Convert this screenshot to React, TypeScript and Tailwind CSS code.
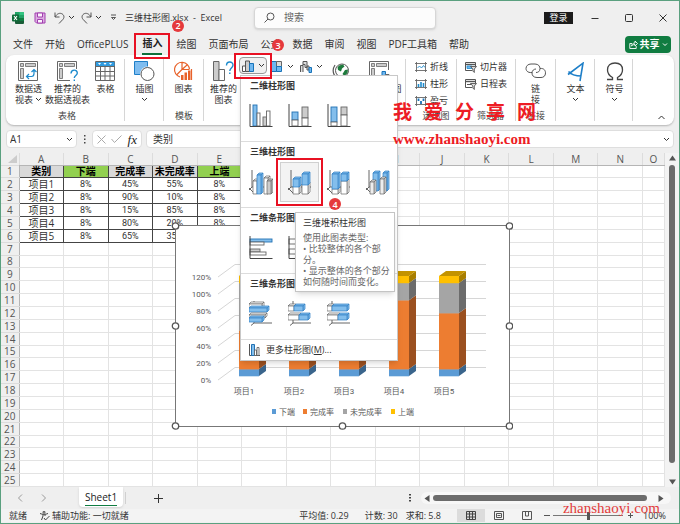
import type { ReactNode } from "react"
import clsx from "clsx"

//------------------------------------------------------------
// DATA

const COLUMNS = ["A", "B", "C", "D", "E", "F", "G", "H", "I", "J", "K", "L", "M", "N", "O"]

const ROWS: string[][] = [
  ["类别", "下端", "完成率", "未完成率", "上端"],
  ["项目1", "8%", "45%", "55%", "8%"],
  ["项目2", "8%", "90%", "10%", "8%"],
  ["项目3", "8%", "15%", "85%", "8%"],
  ["项目4", "8%", "80%", "20%", "8%"],
  ["项目5", "8%", "65%", "35%", "8%"],
]

const TABS = [
  "文件",
  "开始",
  "OfficePLUS",
  "插入",
  "绘图",
  "页面布局",
  "公式",
  "数据",
  "审阅",
  "视图",
  "PDF工具箱",
  "帮助",
]

const BLUE = "#83beec"
const INK = "#444"

//------------------------------------------------------------
// SMALL ICONS

const Chevron = ({ up = false }: { up?: boolean }) => (
  <svg width="7" height="5" viewBox="0 0 7 5" fill="none" stroke="#333" className="shrink-0">
    <path d={up ? "M.5 4 3.500 1l3 3" : "M1 1l2.500 2.500L6 1"} />
  </svg>
)

const ExcelIcon = () => (
  <svg width="12" height="12" viewBox="0 0 12 12">
    <path d="M3 0h8q1 0 1 1v5H3z" fill="#21a366" />
    <path d="M7.500 0H11q1 0 1 1v2H7.500z" fill="#33c481" />
    <path d="M3 6h9v5q0 1-1 1H4q-1 0-1-1z" fill="#185c37" />
    <path d="M7.500 6H12v3H7.500z" fill="#107c41" />
    <rect y="2.500" width="7" height="7" rx="1" fill="#0e6b38" />
    <path d="M2 4l3 4M5 4L2 8" stroke="#fff" strokeWidth="1.100" />
  </svg>
)

const SaveIcon = () => (
  <svg width="12" height="12" viewBox="0 0 12 12" fill="#dcaee2" stroke="#a23fb0">
    <path d="M1 1h10v10H2.500L1 9.500z" />
    <path d="M3.500 1h5v4h-5z" fill="#fbf2fc" />
    <path d="M3.500 11V7.500h5V11z" fill="#fbf2fc" />
  </svg>
)

const UndoIcon = ({ flip = false }: { flip?: boolean }) => (
  <svg
    width="11"
    height="12"
    viewBox="0 0 11 12"
    fill="none"
    stroke="#555"
    className={clsx(flip && "-scale-x-100")}
  >
    <path d="M1 .5V5h4.500M1 5C3 1.500 6 .5 8.300 2c2.200 1.500 2 4 .5 5.500L5 11.500" />
  </svg>
)

const SearchIcon = () => (
  <svg width="11" height="11" viewBox="0 0 11 11" fill="none" stroke="#555">
    <circle cx="6.500" cy="4.500" r="3.500" />
    <path d="M4 7L.5 10.500" />
  </svg>
)

const ShareIcon = () => (
  <svg width="9" height="9" viewBox="0 0 9 9" fill="none" stroke="#fff" strokeWidth=".9">
    <path d="M3 3.500H.8v5h6.400V6M2.500 6C3 4 4 3 6 3V1l2.500 2.500L6 6V4.500C4.500 4.500 3.500 5 2.500 6z" />
  </svg>
)

//------------------------------------------------------------
// RIBBON ICONS

const PivotIcon = ({ question = false }: { question?: boolean }) => (
  <svg width="21" height="21" viewBox="0 0 21 21" fill="none" stroke="#666">
    <path d={question ? "M13 19.500H.5V.5h19V8" : "M.5.5h19v19H.5z"} fill="#fff" />
    <path d="M2.500 2.500h3v3h-3zM7.500 2.500h10v3h-10zM2.500 7.500h3v10h-3z" fill="#ccc" strokeWidth=".8" />
    {question ? (
      <path d="M14 12.500c.2-4.500 6.300-4.300 6.300-.5 0 2.500-3 2.500-3 5M17.300 18.500v1.500" stroke="#1e8bcd" strokeWidth="1.400" />
    ) : (
      <path d="M9 15.500h4.500q2.500 0 2.500-3V9M11 13l-2.500 2.500L11 18M13.500 11L16 8.500l2.500 2.500" stroke="#1e8bcd" strokeWidth="1.200" />
    )}
  </svg>
)

const TableIcon = () => (
  <svg width="21" height="21" viewBox="0 0 21 21" fill="none" stroke="#666">
    <path d="M.5.5h19v19H.5z" fill="#fff" />
    <path d="M1 1h18.500v4H1z" fill="#2f9be0" stroke="none" />
    <path d="M3 2h3L4.500 4zM8.500 2h3L10 4zM14 2h3l-1.500 2z" fill="#fff" stroke="none" />
    <path d="M.5 5.500h19M.5 10.500h19M.5 15h19M5.500 5.500v14M10 5.500v14M15 5.500v14" />
  </svg>
)

const ShapesIcon = () => (
  <svg width="21" height="21" viewBox="0 0 21 21">
    <path d="M.5.500h13v13H.5z" fill="#7fbdf0" stroke="#1e7fc8" />
    <circle cx="13.500" cy="13" r="7.500" fill="#fff" />
    <circle cx="13.500" cy="13" r="6.500" fill="#fff" stroke="#555" />
  </svg>
)

const TemplateChartIcon = () => (
  <svg width="21" height="21" viewBox="0 0 21 21" fill="none" stroke="#e8622a" strokeWidth="1.200">
    <path d="M7 16A7.500 7.500 0 1 1 16.500 8.500M9 1.500v7L3.500 14M9 8.500h7M9 8.500L14 4" />
    <path d="M8 14h2.500v5H8zM11.500 11.500H14V19h-2.500zM15 9.500h2.500V19H15z" fill="#e8622a" stroke="none" />
    <path d="M18.500 8v11" />
  </svg>
)

const RecommendedChartIcon = () => (
  <svg width="22" height="21" viewBox="0 0 22 21" fill="none" stroke="#666">
    <path d="M.5.500h5.500v19H.5z" fill="#ccc" />
    <path d="M6 8.500h5.500v11H6z" fill="#fff" />
    <path d="M13.500 4.500c0-4.500 6.500-4.500 6.500-.5 0 3-3.200 3-3.200 6M16.800 11.500V13" stroke="#1e8bcd" strokeWidth="1.400" />
  </svg>
)

const ColumnIcon = () => (
  <svg width="12" height="12" viewBox="0 0 12 12" stroke="#555">
    <path d="M.5 6h3v5.500h-3z" fill="#fff" />
    <path d="M3.500 1h4v10.500h-4z" fill="#ccc" />
    <path d="M7.500 3.500h4v8h-4z" fill="#6fb7f0" stroke="#1873b8" />
  </svg>
)

const HierarchyIcon = () => (
  <svg width="12" height="12" viewBox="0 0 12 12" stroke="#666">
    <path d="M.5.500h5v10h-5z" fill="#6fb7f0" stroke="#1873b8" />
    <path d="M5.500.500h5v5h-5z" fill="#ddd" />
    <path d="M5.500 5.500h5v5h-5z" fill="#6fb7f0" stroke="#1873b8" />
  </svg>
)

const WaterfallIcon = () => (
  <svg width="12" height="12" viewBox="0 0 12 12" stroke="#555" fill="#ddd">
    <path d="M.5 11V4.500h2.500V11M3 4.500v-4h4v6H5v-3H3M7 5h2v4H7z" />
    <path d="M9 6.500h2.500v5H9z" fill="#6fb7f0" stroke="#1873b8" />
  </svg>
)

const GlobeIcon = () => (
  <svg width="18" height="20" viewBox="0 0 18 20" fill="none">
    <circle cx="10" cy="8.500" r="6.500" fill="#fff" stroke="#555" />
    <path d="M7 3.500l4-1 1.500 2-2.500 2-1 3-3-1.500-.5-2.500zM13 8l3-.5-.5 3.500-3 3-2-2z" fill="#1e7a3c" />
    <path d="M3 3C-1 9 2 17 9.500 17.500c3 0 5-1 6.500-2.500M9.500 17.500V20" stroke="#555" strokeWidth="1.200" />
  </svg>
)

const PivotChartIcon = () => (
  <svg width="21" height="21" viewBox="0 0 21 21" stroke="#666">
    <path d="M11 19.500H.5V.5h19V9" fill="#fff" />
    <path d="M2.500 2.500h3v3h-3zM7.500 2.500h10v3h-10zM2.500 7.500h3v10h-3z" fill="#ccc" strokeWidth=".8" />
    <path d="M13 10.500h3.500v9H13z" fill="#6fb7f0" stroke="#1873b8" />
    <path d="M16.500 13.500h3.500v6h-3.500z" fill="#fff" />
  </svg>
)

const SparkIcon = ({ kind }: { kind: "line" | "column" | "winloss" }) => (
  <svg width="12" height="10" viewBox="0 0 12 10" fill="none" stroke="#666" strokeWidth=".9">
    <path d="M1.500 0v10M10.500 0v10M0 1.500h12M0 8.500h12" />
    {kind === "line" && <path d="M2.500 6l2-2 2 2 2-2.500 1.500 2" stroke="#1e8bcd" />}
    {kind === "column" && <path d="M3.500 8V5M6 8V3M8.500 8V4" stroke="#1e8bcd" strokeWidth="1.600" />}
    {kind === "winloss" && <path d="M3.500 2.500V5M6 5v3M8.500 2.500V5" stroke="#1873b8" strokeWidth="1.800" />}
  </svg>
)

const FilterIcon = ({ timeline = false }: { timeline?: boolean }) => (
  <svg width="12" height="12" viewBox="0 0 12 12" fill="none" stroke="#555">
    <path d="M7 9.500H.5v-8h10V5" fill="#fff" />
    <path d="M.5 3.500h10" strokeWidth="1.400" />
    {timeline ? <path d="M2 6.500h4" /> : <path d="M2 5h5v2.500H2z" fill="#6fb7f0" stroke="#1e8bcd" strokeWidth=".8" />}
    <path d="M5.500 5.500h6L9.300 8v3.500L7.800 10V8z" fill="#ddd" strokeWidth=".9" />
  </svg>
)

const LinkIcon = () => (
  <svg width="22" height="17" viewBox="0 0 22 17" fill="none" stroke="#555">
    <path d="M7 9.500C2 10 1 7 1 5.500 1 3 3 1 6 1h4c3.500 0 5 2.500 5 4.500 0 3-2 4-4 4" />
    <path d="M15 5.500c4.500-.5 5.500 2.500 5.500 4.500 0 3-2 4.500-4.500 4.500h-4c-3.500 0-5-2-5-4.500C7 7.500 9 6 11 6" />
  </svg>
)

const TextIcon = () => (
  <svg width="18" height="20" viewBox="0 0 18 20" fill="none" stroke="#1e7fc8" strokeWidth="1.600">
    <path d="M1 12.500L16 1.200 13 19M1.500 9.500c2 2.500 7 4.500 13 4.500" />
  </svg>
)

const OmegaIcon = () => (
  <svg width="18" height="19" viewBox="0 0 18 19" fill="none" stroke="#444" strokeWidth="1.300">
    <path d="M1 17.500h5.500v-2C3 13.500 1.500 11 1.500 8c0-4.500 3-7 7.500-7s7.500 2.500 7.500 7c0 3-1.500 5.500-5 7.500v2H17" />
  </svg>
)

//------------------------------------------------------------
// CHART GALLERY ICONS

type PrismProps = { x: number; y: number; w: number; h: number; fill?: string; top?: boolean }

// front face plus a two pixel deep side, and the lid when `top` is set
const Prism = ({ x, y, w, h, fill = "#fff", top = true }: PrismProps) => (
  <g fill={fill} stroke={fill === BLUE ? "#2f80c4" : "#666"} strokeWidth=".7" strokeLinejoin="round">
    {top && <path d={`M${x} ${y}l2-2h${w}l-2 2z`} />}
    <path d={`M${x + w} ${y}l2-2v${h}l-2 2z`} />
    <rect x={x} y={y} width={w} height={h} />
  </g>
)

type FlatProps = { x: number; y: number; w: number; h: number; fill?: string }

const Flat = ({ x, y, w, h, fill = "#fff" }: FlatProps) => (
  <rect x={x} y={y} width={w} height={h} fill={fill} stroke={fill === BLUE ? "#2272b4" : "#666"} strokeWidth=".9" />
)

const GalleryIcon = ({ children, axis = "flat" }: { children: ReactNode; axis?: "flat" | "deep" | "bar" }) => (
  <svg width="24" height="26" viewBox="0 0 24 26" fill="none">
    {axis === "deep" && <path d="M3 1v17L0 21M3 18h20M0 19l6 6" stroke="#555" strokeWidth=".9" />}
    {axis === "bar" && <path d="M5 0v3M5 19v3l-3 2.500M5 22h18" stroke="#555" strokeWidth=".9" />}
    {children}
    {axis === "flat" && <path d="M1 1v22.500h22.500" stroke={INK} />}
  </svg>
)

const SECTIONS: { title: string; items: { label: string; icon: ReactNode }[] }[] = [
  {
    title: "二维柱形图",
    items: [
      {
        label: "簇状柱形图",
        icon: (
          <GalleryIcon>
            <Flat x={4} y={2} w={4} h={21} fill={BLUE} />
            <Flat x={8} y={10} w={3} h={13} />
            <Flat x={14} y={14} w={3.5} h={9} fill="#ccc" />
            <Flat x={17.5} y={8} w={3.5} h={15} />
          </GalleryIcon>
        ),
      },
      {
        label: "堆积柱形图",
        icon: (
          <GalleryIcon>
            <Flat x={4} y={9} w={6} h={8} fill={BLUE} />
            <Flat x={4} y={17} w={6} h={6} />
            <Flat x={14} y={4} w={6} h={11} fill="#ccc" />
            <Flat x={14} y={15} w={6} h={8} />
          </GalleryIcon>
        ),
      },
      {
        label: "百分比堆积柱形图",
        icon: (
          <GalleryIcon>
            <Flat x={4} y={4} w={6} h={15} fill={BLUE} />
            <Flat x={4} y={19} w={6} h={4} />
            <Flat x={14} y={4} w={6} h={8} fill="#ccc" />
            <Flat x={14} y={12} w={6} h={11} />
          </GalleryIcon>
        ),
      },
    ],
  },
  {
    title: "三维柱形图",
    items: [
      {
        label: "三维簇状柱形图",
        icon: (
          <GalleryIcon axis="deep">
            <Prism x={4} y={12} w={4} h={13} />
            <Prism x={8} y={6} w={4} h={19} fill={BLUE} />
            <Prism x={15} y={9} w={4} h={16} />
            <Prism x={18} y={12} w={4} h={13} fill="#ccc" />
          </GalleryIcon>
        ),
      },
      {
        label: "三维堆积柱形图",
        icon: (
          <GalleryIcon axis="deep">
            <Prism x={5} y={17} w={6} h={8} />
            <Prism x={5} y={10} w={6} h={8} fill={BLUE} />
            <Prism x={14} y={15} w={6} h={10} />
            <Prism x={14} y={5} w={6} h={11} fill={BLUE} />
          </GalleryIcon>
        ),
      },
      {
        label: "三维百分比堆积柱形图",
        icon: (
          <GalleryIcon axis="deep">
            <Prism x={5} y={20} w={6} h={5} />
            <Prism x={5} y={5} w={6} h={15} fill={BLUE} />
            <Prism x={14} y={12} w={6} h={13} />
            <Prism x={14} y={5} w={6} h={7} fill={BLUE} />
          </GalleryIcon>
        ),
      },
      {
        label: "三维柱形图",
        icon: (
          <GalleryIcon axis="deep">
            <Prism x={7} y={4} w={5} h={18} fill={BLUE} />
            <Prism x={17} y={4} w={4} h={18} fill={BLUE} />
            <Prism x={4} y={13} w={4} h={12} fill="#eee" />
            <Prism x={14} y={10} w={4} h={15} fill="#eee" />
          </GalleryIcon>
        ),
      },
    ],
  },
  {
    title: "二维条形图",
    items: [
      {
        label: "簇状条形图",
        icon: (
          <GalleryIcon>
            <Flat x={1} y={4} w={22} h={3} fill={BLUE} />
            <Flat x={1} y={7} w={14} h={3} />
            <Flat x={1} y={14} w={10} h={3} fill="#ccc" />
            <Flat x={1} y={17} w={16} h={3} />
          </GalleryIcon>
        ),
      },
      {
        label: "堆积条形图",
        icon: (
          <GalleryIcon>
            <Flat x={1} y={4} w={8} h={5} />
            <Flat x={9} y={4} w={8} h={5} fill={BLUE} />
            <Flat x={1} y={14} w={10} h={5} />
            <Flat x={11} y={14} w={10} h={5} fill="#ccc" />
          </GalleryIcon>
        ),
      },
      {
        label: "百分比堆积条形图",
        icon: (
          <GalleryIcon>
            <Flat x={1} y={4} w={6} h={5} />
            <Flat x={7} y={4} w={14} h={5} fill={BLUE} />
            <Flat x={1} y={14} w={12} h={5} />
            <Flat x={13} y={14} w={8} h={5} fill="#ccc" />
          </GalleryIcon>
        ),
      },
    ],
  },
  {
    title: "三维条形图",
    items: [
      {
        label: "三维簇状条形图",
        icon: (
          <GalleryIcon axis="bar">
            <Prism x={0} y={3} w={13} h={4} />
            <Prism x={0} y={7} w={18} h={4} fill={BLUE} />
            <Prism x={0} y={14} w={16} h={3} />
            <Prism x={0} y={17} w={13} h={4} fill={BLUE} />
          </GalleryIcon>
        ),
      },
      {
        label: "三维堆积条形图",
        icon: (
          <GalleryIcon axis="bar">
            <Prism x={0} y={5} w={6} h={5} />
            <Prism x={6} y={5} w={9} h={5} fill={BLUE} />
            <Prism x={0} y={14} w={11} h={5} />
            <Prism x={11} y={14} w={9} h={5} fill={BLUE} />
          </GalleryIcon>
        ),
      },
      {
        label: "三维百分比堆积条形图",
        icon: (
          <GalleryIcon axis="bar">
            <Prism x={0} y={5} w={5} h={5} />
            <Prism x={5} y={5} w={15} h={5} fill={BLUE} />
            <Prism x={0} y={14} w={11} h={5} />
            <Prism x={11} y={14} w={9} h={5} fill={BLUE} />
          </GalleryIcon>
        ),
      },
    ],
  },
]

//------------------------------------------------------------
// STEP MARKERS

const Step = ({ n, className }: { n: number; className: string }) => (
  <span
    className={clsx(
      "absolute z-30 flex h-3 w-3 items-center justify-center rounded-full bg-[#e5393c] text-[9px] leading-none font-semibold text-white",
      className,
    )}
  >
    {n}
  </span>
)

//------------------------------------------------------------
// RIBBON PARTS

const Group = ({ label, className, children }: { label?: string; className: string; children: ReactNode }) => (
  <div className={clsx("relative flex shrink-0 flex-col justify-between py-[3px]", className)}>
    <div className="flex">{children}</div>
    <div className="h-3 text-center leading-3 text-[#444]">{label}</div>
    <div className="absolute top-1 right-0 bottom-1 w-px bg-[#d6d6d6]" />
  </div>
)

type BigButtonProps = { icon: ReactNode; lines: string[]; arrow?: "inline" | "below"; className?: string }

const BigButton = ({ icon, lines, arrow, className = "w-[39px]" }: BigButtonProps) => (
  <button className={clsx("flex shrink-0 flex-col items-center pt-[3px] leading-[11px]", className)}>
    <span className="flex h-[21px] items-center">{icon}</span>
    <span className="mt-px flex flex-col items-center whitespace-nowrap">
      {lines.map((line, i) => (
        <span key={line} className="flex items-center gap-[2px]">
          {line}
          {arrow === "inline" && i === lines.length - 1 && <Chevron />}
        </span>
      ))}
    </span>
    {arrow === "below" && (
      <span className="flex h-[11px] items-center">
        <Chevron />
      </span>
    )}
  </button>
)

const RowButton = ({ icon, label }: { icon: ReactNode; label: string }) => (
  <button className="flex h-[17px] items-center gap-[3px] whitespace-nowrap">
    {icon}
    {label}
  </button>
)

const ChartMenu = () => (
  <div className="absolute top-full left-px z-20 w-[158px] border border-[#c8c8c8] bg-white shadow-md">
    {SECTIONS.map((section) => (
      <section key={section.title} className="h-[66px] border-b border-[#dcdcdc]">
        <h3 className="h-5 pl-[9px] leading-5 font-bold text-[#333]">{section.title}</h3>
        <div className="flex">
          {section.items.map((item, i) => {
            const active = section.title === "三维柱形图" && i === 1
            return (
              <button
                key={item.label}
                aria-label={item.label}
                className={clsx(
                  "relative flex h-10 w-[39px] items-center justify-center",
                  active && "border border-[#d0d0d0] bg-[#f3f3f3]",
                )}
              >
                {item.icon}
                {active && <span className="absolute -inset-[5px] border-2 border-[#e81123]" />}
                {active && <Step n={4} className="-right-[23px] -bottom-[9px]" />}
              </button>
            )
          })}
        </div>
      </section>
    ))}
    <button className="flex h-5 items-center gap-[6px] pl-2 text-[#333]">
      <svg width="11" height="12" viewBox="0 0 11 12" fill="#fff" stroke="#555">
        <path d="M.5 0v11.500H11" fill="none" />
        <path d="M2.500.500h3v11h-3z" fill={BLUE} stroke="#2272b4" />
        <path d="M5.500 6h2v5.500h-2zM8 3.500h2v8H8z" strokeWidth=".8" />
      </svg>
      <span>
        更多柱形图(<u>M</u>)...
      </span>
    </button>

    {/* TOOLTIP */}
    <div
      role="tooltip"
      className="absolute top-[136px] left-[54px] z-20 w-[100px] border border-[#c4c4c4] bg-white py-1 pl-[7px] leading-[11px] text-[#666] shadow-md"
    >
      <p className="mb-1 text-[#333]">三维堆积柱形图</p>
      <p>使用此图表类型:</p>
      <p>
        • 比较整体的各个部
        <br />
        分。
      </p>
      <p className="whitespace-nowrap">
        • 显示整体的各个部分
        <br />
        如何随时间而变化。
      </p>
    </div>
  </div>
)

const Ribbon = () => (
  <div className="relative z-20 mx-[5px] flex h-[70px] rounded-lg bg-white text-[9px] text-[#333] shadow-[0_1px_2px_rgba(0,0,0,0.25)]">
    <Group label="表格" className="w-[119px] pl-[3px]">
      <BigButton icon={<PivotIcon />} lines={["数据透", "视表"]} arrow="inline" />
      <BigButton icon={<PivotIcon question />} lines={["推荐的", "数据透视表"]} />
      <BigButton icon={<TableIcon />} lines={["表格"]} className="w-[37px]" />
    </Group>
    <Group className="w-[39px]">
      <BigButton icon={<ShapesIcon />} lines={["插图"]} arrow="below" />
    </Group>
    <Group label="模板" className="w-10">
      <BigButton icon={<TemplateChartIcon />} lines={["图表"]} />
    </Group>
    <Group label="图表" className="w-[202px] pl-1">
      <BigButton icon={<RecommendedChartIcon />} lines={["推荐的", "图表"]} className="w-[31px]" />
      <div className="flex h-[17px] gap-1">
        <div className="relative -mt-px">
          <button
            aria-label="插入柱形图或条形图"
            className="flex h-[17px] w-7 items-center justify-center gap-1 rounded border border-[#999] bg-[#f0f0f0]"
          >
            <ColumnIcon />
            <Chevron />
          </button>
          <span className="absolute -inset-x-[5px] -inset-y-1 z-30 border-2 border-[#e81123]" />
          <Step n={3} className="-top-[18px] -right-[17px]" />
          <ChartMenu />
        </div>
        <button aria-label="插入层次结构图表" className="flex w-[25px] items-center gap-1">
          <HierarchyIcon />
          <Chevron />
        </button>
        <button aria-label="插入瀑布图" className="flex w-[25px] items-center gap-1">
          <WaterfallIcon />
          <Chevron />
        </button>
      </div>
      <BigButton icon={<GlobeIcon />} lines={["地图"]} arrow="below" className="w-[31px]" />
      <BigButton icon={<PivotChartIcon />} lines={["数据透视图"]} arrow="below" className="ml-1 w-[38px]" />
    </Group>
    <Group label="迷你图" className="w-[51px] pl-[9px]">
      <div className="flex flex-col">
        <RowButton icon={<SparkIcon kind="line" />} label="折线" />
        <RowButton icon={<SparkIcon kind="column" />} label="柱形" />
        <RowButton icon={<SparkIcon kind="winloss" />} label="盈亏" />
      </div>
    </Group>
    <Group label="筛选器" className="w-[59px] pl-2">
      <div className="flex flex-col">
        <RowButton icon={<FilterIcon />} label="切片器" />
        <RowButton icon={<FilterIcon timeline />} label="日程表" />
      </div>
    </Group>
    <Group label="链接" className="w-10">
      <BigButton icon={<LinkIcon />} lines={["链", "接"]} />
    </Group>
    <Group className="w-[39px]">
      <BigButton icon={<TextIcon />} lines={["文本"]} arrow="below" />
    </Group>
    <Group className="w-[38px]">
      <BigButton icon={<OmegaIcon />} lines={["符号"]} arrow="below" />
    </Group>
    <div className="flex flex-1 items-end justify-end p-[9px] pb-1">
      <button aria-label="折叠功能区" className="pb-px">
        <Chevron up />
      </button>
    </div>

    {/* SITE MARK */}
    <div className="absolute top-[44px] left-[387px] z-30 text-[#ed1c24]">
      <div className="flex gap-3 text-[19px] leading-[26px] font-bold">
        {["我", "爱", "分", "享", "网"].map((c) => (
          <span key={c}>{c}</span>
        ))}
      </div>
      <div className="font-['Liberation_Serif',serif] text-[15px] leading-7 font-bold">www.zhanshaoyi.com</div>
    </div>
  </div>
)

//------------------------------------------------------------
// CHART OBJECT

const SERIES = [
  { name: "下端", color: "#5b9bd5", side: "#3a658c" },
  { name: "完成率", color: "#ed7d31", side: "#9b5020" },
  { name: "未完成率", color: "#a5a5a5", side: "#6c6c6c" },
  { name: "上端", color: "#ffc000", side: "#a87e00" },
]

const BARS = ROWS.slice(1).map((row) => ({ name: row[0], values: row.slice(1).map((v) => parseInt(v, 10)) }))

const HANDLES = [
  [4, 4],
  [171, 4],
  [338, 4],
  [4, 104],
  [338, 104],
  [4, 204],
  [171, 204],
  [338, 204],
]

const LEGEND_X = [101, 132, 172, 220]

const Chart = () => (
  <svg
    width="342"
    height="208"
    viewBox="0 0 342 208"
    className="absolute top-[69px] left-[170px] font-['Roboto','Noto_Sans_CJK_SC',sans-serif] text-[8px]"
    fill="#595959"
  >
    <rect x="4.500" y="3.500" width="334" height="201" fill="#fff" stroke="#777" />
    {[0, 20, 40, 60, 80, 100, 120].map((v, i) => {
      const y = 158 - Math.round(i * 17.2)
      return (
        <g key={v}>
          <text x="40" y={y + 3} textAnchor="end">
            {v}%
          </text>
          <path d={`M47 ${y}l17-12.500h251`} fill="none" stroke="#d6d6d6" />
        </g>
      )
    })}
    {BARS.map((bar, i) => {
      const x = 68 + i * 50
      let base = 154
      return (
        <g key={bar.name}>
          {bar.values.map((v, s) => {
            const h = v * 0.862
            base -= h
            return (
              <g key={SERIES[s].name}>
                <rect x={x} y={base} width="20" height={h + 0.3} fill={SERIES[s].color} />
                <path d={`M${x + 20} ${base}l7-5v${h}l-7 5z`} fill={SERIES[s].side} />
              </g>
            )
          })}
          <path d={`M${x} ${base}l7-5h20l-7 5z`} fill="#c39300" />
          <text x={x + 5} y="172" textAnchor="middle">
            {bar.name}
          </text>
        </g>
      )
    })}
    {SERIES.map((s, i) => (
      <g key={s.name}>
        <rect x={LEGEND_X[i]} y="187" width="4" height="5" fill={s.color} />
        <text x={LEGEND_X[i] + 7} y="193">
          {s.name}
        </text>
      </g>
    ))}
    {HANDLES.map(([x, y]) => (
      <circle key={`${x}-${y}`} cx={x + 0.5} cy={y} r="3.200" fill="#fff" stroke="#555" strokeWidth="1.300" />
    ))}
  </svg>
)

//------------------------------------------------------------
// SHEET

const Sheet = () => (
  <div className="relative flex">
    <div className="min-w-0 flex-1">
      <table className="h-[334px] w-full table-fixed border-collapse bg-white text-center text-[10px] leading-[10px] text-[#333]">
        <colgroup>
          <col className="w-[18px]" />
          {COLUMNS.map((c) => (
            <col key={c} className={c === "O" ? "w-[22px]" : undefined} />
          ))}
        </colgroup>
        <thead>
          <tr className="h-3 bg-[#efefef] text-[#555]">
            <th className="p-0">
              <svg width="9" height="8" viewBox="0 0 9 8" className="mr-[2px] ml-auto">
                <path d="M9 0v8H0z" fill="#ccc" />
              </svg>
            </th>
            {COLUMNS.map((c) => (
              <th key={c} className="border-x border-b border-x-[#dcdcdc] border-b-[#b5b5b5] p-0 font-normal">
                {c}
              </th>
            ))}
          </tr>
        </thead>
        <tbody>
          {Array.from({ length: 25 }, (_, r) => (
            <tr key={r} className="h-3">
              <th className="border-y border-r border-y-[#dcdcdc] border-r-[#b5b5b5] bg-[#efefef] p-0 font-normal text-[#555]">
                {r + 1}
              </th>
              {COLUMNS.map((c, i) => {
                const value = ROWS[r]?.[i]
                const green = i === 1 || i === 4
                return (
                  <td
                    key={c}
                    className={clsx(
                      "border p-0 whitespace-nowrap",
                      value ? "border-[#444]" : "border-[#e3e3e3]",
                      value && r === 0 && "font-bold text-black",
                      value && r === 0 && (green ? "bg-[#92d050]" : "bg-[#d9d9d9]"),
                      value && r > 0 && i > 0 && "font-['Roboto',sans-serif] text-[9px]",
                    )}
                  >
                    {value}
                  </td>
                )
              })}
            </tr>
          ))}
        </tbody>
      </table>
    </div>
    <div className="flex w-[14px] flex-col items-center justify-between bg-[#f3f3f3] py-[2px]">
      <svg width="7" height="6" viewBox="0 0 7 6">
        <path d="M3.500.500L7 5.500H0z" fill="#555" />
      </svg>
      <div className="mt-1 mb-auto h-[298px] w-[6px] rounded-full bg-[#6b6b6b]" />
      <svg width="7" height="6" viewBox="0 0 7 6">
        <path d="M3.500 5.500L7 .5H0z" fill="#555" />
      </svg>
    </div>
    <Chart />
  </div>
)

//------------------------------------------------------------
// PAGE

const App = () => (
  <div className="relative flex min-h-screen w-full flex-col overflow-hidden border border-[#5aa07f] bg-[#efefef] font-['Open_Sans','Noto_Sans_CJK_SC',sans-serif] text-[10px] text-[#333]">
    {/* TITLE BAR */}
    <header className="flex h-[33px] items-center pr-3 pl-[11px]">
      <ExcelIcon />
      <button aria-label="保存" className="ml-[10px]">
        <SaveIcon />
      </button>
      <button aria-label="撤消" className="ml-2 flex items-center gap-[3px]">
        <UndoIcon />
        <Chevron />
      </button>
      <button aria-label="恢复" className="ml-[6px] flex items-center gap-[3px]">
        <UndoIcon flip />
        <Chevron />
      </button>
      <button aria-label="自定义快速访问工具栏" className="ml-2">
        <svg width="7" height="7" viewBox="0 0 7 7" fill="none" stroke="#444" strokeWidth=".9">
          <path d="M1 1h5M1.500 3.500h4L3.500 5.500z" />
        </svg>
      </button>
      <div className="relative ml-2 w-[129px] text-[9px] whitespace-nowrap">
        三维柱形图.xlsx&nbsp; -&nbsp; Excel
        <Step n={2} className="top-[9px] left-[47px]" />
      </div>
      <label className="flex h-[22px] w-[182px] items-center gap-[9px] rounded border border-[#d6d6d6] bg-[#fcfcfc] px-[9px] shadow-sm">
        <SearchIcon />
        <input type="search" placeholder="搜索" aria-label="搜索" className="min-w-0 flex-1 outline-none placeholder:text-[#666]" />
      </label>
      <button className="ml-auto h-3 w-[29px] bg-[#1b1b1b] text-[9px] leading-3 text-white">登录</button>
      <div className="ml-[18px] flex items-center gap-[26px]">
        <button aria-label="最小化">
          <svg width="8" height="8" viewBox="0 0 8 8" stroke="#333">
            <path d="M.5 4.500h7" />
          </svg>
        </button>
        <button aria-label="最大化">
          <svg width="8" height="8" viewBox="0 0 8 8" fill="none" stroke="#333">
            <rect x=".5" y=".5" width="7" height="7" rx="1" />
          </svg>
        </button>
        <button aria-label="关闭">
          <svg width="8" height="8" viewBox="0 0 8 8" stroke="#333">
            <path d="M.5.500l7 7M7.500.500l-7 7" />
          </svg>
        </button>
      </div>
    </header>

    {/* TABS */}
    <nav className="flex h-[21px] items-center gap-3 pr-2 pl-3">
      {TABS.map((tab) =>
        tab === "插入" ? (
          <button key={tab} className="relative mx-[2px] h-full border-b-2 border-[#0f703b] font-bold whitespace-nowrap text-[#222]">
            {tab}
            <span className="absolute -inset-x-2 -top-px -bottom-[6px] z-30 border-2 border-[#e81123]" />
          </button>
        ) : (
          <button key={tab} className="whitespace-nowrap">
            {tab}
          </button>
        ),
      )}
      <button className="ml-auto flex h-[17px] w-[46px] items-center justify-center gap-[2px] rounded bg-[#107c41] font-semibold whitespace-nowrap text-white">
        <ShareIcon />
        共享
        <svg width="6" height="4" viewBox="0 0 6 4" fill="none" stroke="#fff">
          <path d="M1 .5l2 2 2-2" />
        </svg>
      </button>
    </nav>

    <Ribbon />

    {/* FORMULA BAR */}
    <div className="flex items-center px-[5px] py-[5px]">
      <label className="flex h-[18px] w-[71px] items-center rounded border border-[#dedede] bg-white px-[3px]">
        <input aria-label="名称框" defaultValue="A1" className="min-w-0 flex-1 outline-none" />
        <Chevron />
      </label>
      <svg width="15" height="9" viewBox="0 0 15 9" fill="#444">
        <path d="M7 0h1.500v1.500H7zM7 3.500h1.500V5H7zM7 7h1.500v1.500H7z" />
      </svg>
      <div className="flex h-[18px] w-[50px] items-center justify-between rounded border border-[#dedede] bg-white px-1">
        <button aria-label="取消">
          <svg width="9" height="9" viewBox="0 0 9 9" stroke="#aaa">
            <path d="M.5.500l8 8M8.500.500l-8 8" />
          </svg>
        </button>
        <button aria-label="输入">
          <svg width="11" height="8" viewBox="0 0 11 8" fill="none" stroke="#aaa">
            <path d="M.5 4l3 3.500 7-7" />
          </svg>
        </button>
        <button className="font-['Liberation_Serif',serif] text-[13px] leading-none text-[#222] italic">fx</button>
      </div>
      <label className="ml-1 flex h-[18px] flex-1 items-center rounded border border-[#dedede] bg-white px-[6px] pr-[3px]">
        <input aria-label="编辑栏" defaultValue="类别" className="min-w-0 flex-1 outline-none" />
        <Chevron />
      </label>
    </div>

    <Sheet />

    {/* SHEET TABS */}
    <div className="flex h-[22px] items-center pr-2 pl-4">
      <button aria-label="上一个工作表">
        <svg width="7" height="8" viewBox="0 0 7 8" fill="none" stroke="#999">
          <path d="M5 .5L1.500 4 5 7.500" />
        </svg>
      </button>
      <button aria-label="下一个工作表" className="ml-4">
        <svg width="7" height="8" viewBox="0 0 7 8" fill="none" stroke="#999">
          <path d="M2 .5L5.500 4 2 7.500" />
        </svg>
      </button>
      <button className="mb-[2px] ml-8 h-5 rounded-b bg-white px-[6px] text-[#222] shadow-sm">
        <span className="block border-b border-[#107c41] leading-4">Sheet1</span>
      </button>
      <span className="ml-[2px] h-3 w-px bg-[#d0d0d0]" />
      <button aria-label="新工作表" className="ml-7">
        <svg width="9" height="9" viewBox="0 0 9 9" stroke="#333">
          <path d="M4.500 0v9M0 4.500h9" />
        </svg>
      </button>
      <svg width="2" height="8" viewBox="0 0 2 8" fill="#444" className="mr-[10px] ml-auto">
        <path d="M0 0h2v1.500H0zM0 3h2v1.500H0zM0 6h2v1.500H0z" />
      </svg>
      <div className="flex h-[12px] w-[250px] items-center rounded-full bg-[#f7f7f7] px-[3px]">
        <svg width="6" height="7" viewBox="0 0 6 7">
          <path d="M.5 3.500L5.500 0v7z" fill="#555" />
        </svg>
        <div className="mr-[11px] ml-[3px] h-[6px] flex-1 rounded-full bg-[#6b6b6b]" />
        <svg width="6" height="7" viewBox="0 0 6 7" className="mr-1">
          <path d="M5.500 3.500L.5 0v7z" fill="#555" />
        </svg>
      </div>
    </div>

    {/* STATUS BAR */}
    <footer className="relative flex h-[13px] items-center bg-[#f3f3f3] pr-3 pl-2 text-[9px] whitespace-nowrap">
      <span>就绪</span>
      <svg width="11" height="10" viewBox="0 0 11 10" fill="none" stroke="#444" className="ml-3">
        <path d="M1 2.500c2 1 6 1 8 0M4 3v2L2.500 9M6 3v2" />
        <circle cx="5" cy="1.200" r="1" />
        <path d="M5 7l1.500 2L10.500 5" />
      </svg>
      <span className="ml-[2px]">辅助功能: 一切就绪</span>
      <div className="ml-auto flex">
        <span className="mr-4">平均值: 0.29</span>
        <span className="mr-2">计数: 30</span>
        <span>求和: 5.8</span>
      </div>
      <button aria-label="普通" className="ml-4 flex h-full w-7 items-center justify-center bg-[#dcdcdc]">
        <svg width="10" height="9" viewBox="0 0 10 9" fill="none" stroke="#444">
          <path d="M.5.500h9v8h-9zM.5 3h9M.5 6h9M3.500.500v8M6.500.500v8" />
        </svg>
      </button>
      <button aria-label="页面布局视图" className="ml-[9px]">
        <svg width="10" height="9" viewBox="0 0 10 9" fill="none" stroke="#555">
          <path d="M.5.500h9v8h-9zM2.500 2.500h5v4h-5zM3.500 4.500h3" />
        </svg>
      </button>
      <button aria-label="分页预览" className="ml-[18px]">
        <svg width="10" height="9" viewBox="0 0 10 9" fill="none" stroke="#555">
          <path d="M.5.500h9v8h-9zM3.500.500v4.500h3V.5" />
        </svg>
      </button>
      <button aria-label="缩小" className="ml-[11px]">
        <svg width="7" height="7" viewBox="0 0 7 7" stroke="#555">
          <path d="M1 3.500h6" />
        </svg>
      </button>
      <input
        type="range"
        aria-label="显示比例"
        className="mx-[3px] h-px w-[70px] appearance-none bg-[#777] [&::-webkit-slider-thumb]:h-2 [&::-webkit-slider-thumb]:w-[3px] [&::-webkit-slider-thumb]:appearance-none [&::-webkit-slider-thumb]:bg-[#555]"
      />
      <button aria-label="放大" className="ml-px">
        <svg width="7" height="7" viewBox="0 0 7 7" stroke="#555">
          <path d="M1 3.500h5M3.500 1v5" />
        </svg>
      </button>
      <span className="ml-[9px] w-6">100%</span>
      <span className="absolute -top-[10px] right-[19px] font-['Liberation_Serif',serif] text-[15px] leading-[18px] text-[#e23b3b]">
        zhanshaoyi.com
      </span>
    </footer>
  </div>
)

export default App
